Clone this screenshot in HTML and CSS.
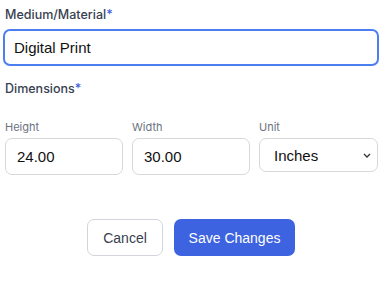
FILE: index.html
```html
<!DOCTYPE html>
<html>
<head>
<meta charset="utf-8">
<link rel="stylesheet" href="styles.css">
</head>
<body>
<form class="form">
  <div class="field">
    <label class="label">Medium/Material<span class="req">*</span></label>
    <input class="input input-focus" type="text" value="Digital Print">
  </div>
  <div class="field dims">
    <div class="label">Dimensions<span class="req">*</span></div>
    <div class="grid">
      <div class="cell">
        <label class="sublabel">Height</label>
        <input class="input" type="text" value="24.00">
      </div>
      <div class="cell">
        <label class="sublabel">Width</label>
        <input class="input" type="text" value="30.00">
      </div>
      <div class="cell">
        <label class="sublabel">Unit</label>
        <div class="select">
          <span>Inches</span>
          <svg class="chev" width="8" height="5" viewBox="0 0 8 5"><path d="M1 1 L4 4 L7 1" fill="none" stroke="#333" stroke-width="1.3"/></svg>
        </div>
      </div>
    </div>
  </div>
  <div class="actions">
    <button type="button" class="btn btn-cancel">Cancel</button>
    <button type="button" class="btn btn-save">Save Changes</button>
  </div>
</form>
</body>
</html>
```
FILE: styles.css
```css
* { box-sizing: border-box; }
html, body { margin: 0; padding: 0; background: #fff; }
body { font-family: Inter, "Noto Sans", sans-serif; }
.form { width: 376px; margin-left: 3px; padding-top: 7px; }
.label { display: block; font-size: 12.5px; font-weight: 500; color: #374151; line-height: 16px; padding-left: 2px; }
.req { color: #3b5bdb; }
.input { display: block; width: 100%; height: 37px; border: 1px solid #d6d8dc; border-radius: 7px; font-family: "Liberation Sans", Arial, sans-serif; font-size: 15px; color: #111; padding: 0 11px; background: #fff; outline: none; }
.field > .input-focus { margin-top: 6px; border: 2px solid #4d7ef0; padding-left: 9px; }
.dims { margin-top: 15px; }
.grid { display: grid; grid-template-columns: 118px 118px 119px; column-gap: 9px; margin-top: 24px; padding-left: 2px; }
.sublabel { display: block; font-size: 11px; color: #6b7280; line-height: 13px; margin-bottom: 4px; }
.select { height: 34px; border: 1px solid #d6d8dc; border-radius: 7px; display: flex; align-items: center; justify-content: space-between; padding: 0 6px 0 14px; font-family: "Liberation Sans", Arial, sans-serif; font-size: 15px; color: #111; }
.chev { margin-top: 1px; }
.actions { display: flex; justify-content: center; gap: 11px; margin-top: 44px; }
.btn { height: 37px; border-radius: 7px; font-family: "Liberation Sans", Arial, sans-serif; font-size: 14px; font-weight: 400; padding: 0; white-space: nowrap; cursor: pointer; }
.btn-cancel { width: 76px; background: #fff; border: 1px solid #d1d5db; color: #374151; }
.btn-save { width: 121px; background: #3d63e0; border: none; color: #fff; }
```
